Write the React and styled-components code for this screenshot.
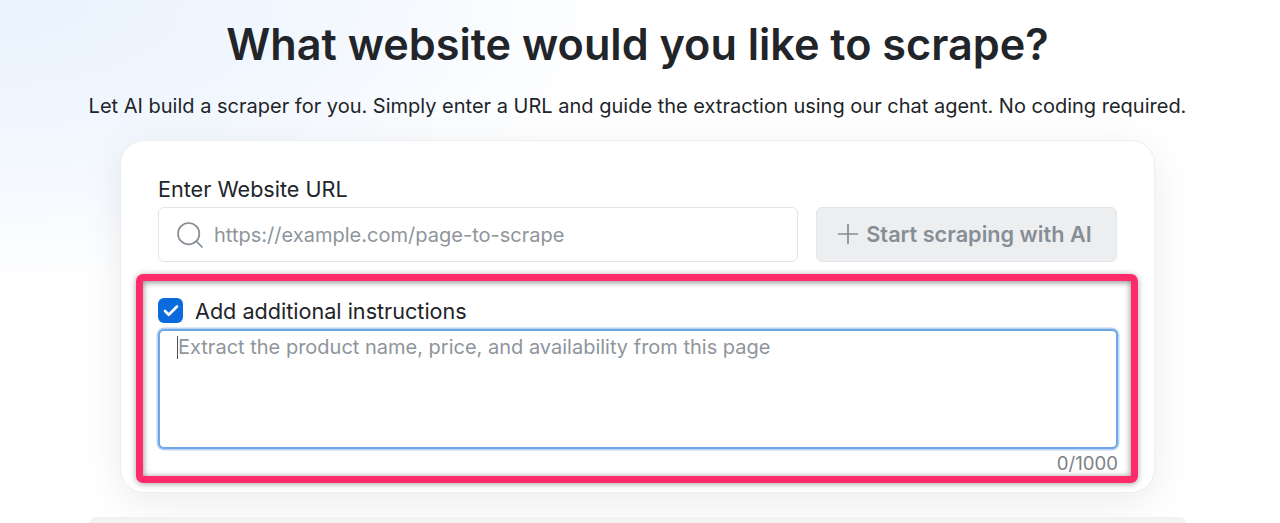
import React from "react";
import styled, { createGlobalStyle } from "styled-components";
import { Search, Plus, Check } from "lucide-react";

const GlobalStyle = createGlobalStyle`
  html, body {
    margin: 0;
    height: 100%;
    overflow: hidden;
    background: #fff;
  }
  body {
    font-family: Inter, "Liberation Sans", sans-serif;
    color: #212529;
  }
`;

const Page = styled.main`
  position: relative;
  height: 523px;
  padding-right: 5px;
  display: flex;
  flex-direction: column;
  align-items: center;
  background:
    radial-gradient(ellipse 620px 290px at 0 0, #e9f2fe 0%, #f3f8fe 55%, rgba(255, 255, 255, 0) 100%),
    #fff;
  overflow: hidden;
`;

const Title = styled.h1`
  margin: 14px 0 0;
  font-size: 43.2px;
  line-height: 60px;
  font-weight: 600;
  color: #212529;
`;

const Subtitle = styled.p`
  margin: 18px 0 0;
  font-size: 20px;
  line-height: 28px;
  color: #212529;
`;

const Card = styled.section`
  position: relative;
  box-sizing: border-box;
  width: 1035px;
  height: 353px;
  margin-top: 20px;
  padding: 35px 37px 0;
  background: #fff;
  border: 1px solid #eceef0;
  border-radius: 24px;
  box-shadow: 0 10px 40px rgba(0, 0, 0, 0.08);
`;

const Label = styled.label`
  display: block;
  font-size: 21.6px;
  line-height: 26px;
  color: #212529;
`;

const UrlRow = styled.div`
  display: flex;
  gap: 18px;
  margin-top: 5px;
`;

const UrlField = styled.div`
  box-sizing: border-box;
  width: 640px;
  height: 55px;
  display: flex;
  align-items: center;
  gap: 8px;
  padding-left: 15px;
  background: #fff;
  border: 1px solid #e3e5e8;
  border-radius: 6px;
  color: #868e96;
`;

const UrlPlaceholder = styled.span`
  font-size: 20.05px;
  color: #8e959c;
`;

const StartButton = styled.button`
  box-sizing: border-box;
  width: 301px;
  height: 55px;
  display: flex;
  align-items: center;
  justify-content: center;
  gap: 2px;
  padding: 0 9px 2px 0;
  font-family: inherit;
  font-size: 21.7px;
  font-weight: 600;
  color: #868e96;
  background: #edeef0;
  border: 1px solid #e3e5e8;
  border-radius: 6px;
`;

const CheckRow = styled.div`
  display: flex;
  align-items: center;
  gap: 12px;
  margin-top: 36px;
`;

const CheckBox = styled.span`
  box-sizing: border-box;
  width: 25px;
  height: 25px;
  display: flex;
  align-items: center;
  justify-content: center;
  background: #0b6bdc;
  border-radius: 6px;
  color: #fff;
`;

const CheckText = styled.span`
  padding-top: 2px;
  font-size: 21.6px;
  line-height: 23px;
  color: #212529;
`;

const InstructionsBox = styled.div`
  box-sizing: border-box;
  width: 960px;
  height: 120px;
  margin-top: 6px;
  padding: 3px 17px;
  background: #fff;
  border: 2px solid #6ea6e6;
  border-radius: 6px;
  box-shadow: 0 0 0 1.5px #b9d4f4;
  display: flex;
  align-items: flex-start;
`;

const Caret = styled.span`
  width: 1px;
  height: 23px;
  margin-top: 2px;
  background: #495057;
`;

const InstructionsPlaceholder = styled.span`
  font-size: 20px;
  line-height: 27px;
  color: #8e959c;
`;

const Counter = styled.div`
  width: 960px;
  margin-top: 3px;
  text-align: right;
  font-size: 18.6px;
  line-height: 22px;
  color: #7b8188;
`;

const Highlight = styled.div`
  position: absolute;
  left: 15px;
  top: 133px;
  width: 1002px;
  height: 209px;
  box-sizing: border-box;
  border: 7px solid #ff2a68;
  border-radius: 7px;
  pointer-events: none;
  box-shadow:
    0 1px 6px rgba(0, 0, 0, 0.35),
    inset 0 1px 6px rgba(0, 0, 0, 0.5);
`;

const BottomStrip = styled.div`
  position: absolute;
  left: 89px;
  top: 517px;
  width: 1098px;
  height: 20px;
  background: #f1f2f4;
  border-radius: 8px 8px 0 0;
`;

export default function App() {
  return (
    <>
      <GlobalStyle />
      <Page>
        <Title>What website would you like to scrape?</Title>
        <Subtitle>
          Let AI build a scraper for you. Simply enter a URL and guide the extraction using our chat agent. No coding required.
        </Subtitle>
        <Card>
          <Label>Enter Website URL</Label>
          <UrlRow>
            <UrlField>
              <Search size={32} strokeWidth={1.3} />
              <UrlPlaceholder>https://example.com/page-to-scrape</UrlPlaceholder>
            </UrlField>
            <StartButton>
              <Plus size={32} strokeWidth={1.3} />
              Start scraping with AI
            </StartButton>
          </UrlRow>
          <CheckRow>
            <CheckBox>
              <Check size={18} strokeWidth={3.5} />
            </CheckBox>
            <CheckText>Add additional instructions</CheckText>
          </CheckRow>
          <InstructionsBox>
            <Caret />
            <InstructionsPlaceholder>Extract the product name, price, and availability from this page</InstructionsPlaceholder>
          </InstructionsBox>
          <Counter>0/1000</Counter>
          <Highlight />
        </Card>
        <BottomStrip />
      </Page>
    </>
  );
}
